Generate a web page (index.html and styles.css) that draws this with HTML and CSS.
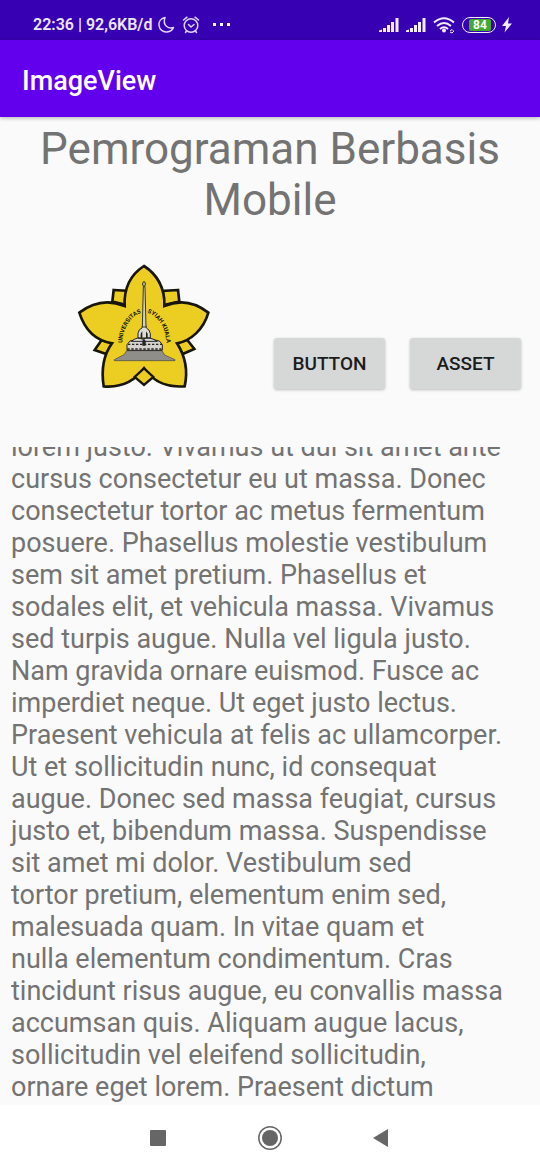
FILE: index.html
```html
<!DOCTYPE html>
<html lang="id">
<head>
<meta charset="utf-8">
<meta name="viewport" content="width=device-width, initial-scale=1">
<title>ImageView</title>
<link rel="stylesheet" href="styles.css">
</head>
<body>
<div class="screen">
  <div class="status">
    <span class="status-text">22:36 | 92,6KB/d</span>
    <svg class="status-left" width="76" height="20" viewBox="0 0 76 20" fill="none" stroke="#e3d6f7" stroke-width="1.5" stroke-linecap="round" stroke-linejoin="round" aria-hidden="true">
      <path d="M8 2.5C3.5 3.500 1.500 7 2 10.500C2.500 14.500 6 17.500 10 17C13 16.700 15.500 15 16.500 12.500C12 14 5 11 8 2.500Z"/>
      <circle cx="34" cy="10.500" r="6.800"/>
      <path d="M26.500 5L30 2.200M41.500 5L38 2.200M31.500 9.500L34 12L37 9.500M29.500 16L28.500 17.500M38.500 16L39.500 17.500"/>
      <g fill="#fff" stroke="none"><rect x="56" y="8" width="3" height="3"/><rect x="63" y="8" width="3" height="3"/><rect x="70" y="8" width="3" height="3"/></g>
    </svg>
    <div class="status-right">
      <svg width="78" height="20" viewBox="0 0 78 20" aria-hidden="true">
        <g fill="#f3edff">
          <path d="M1 17V15.500L4 14.500V17ZM5 13H8V17H5ZM9 10H12V17H9ZM13 7H16V17H13ZM17.500 3H20.500V17H17.500Z"/>
          <path d="M28 17V15.500L31 14.500V17ZM32 13H35V17H32ZM36 10H39V17H36ZM40 7H43V17H40ZM44.500 3H47.500V17H44.500Z"/>
          <circle cx="66" cy="15.500" r="2"/>
        </g>
        <g fill="none" stroke="#f3edff" stroke-width="2">
          <path d="M56 7.500Q66 -1 76 7.500M59 11Q66 5 73 11M62 14Q66 10.500 70 14"/>
          <path stroke-width="1" d="M72 16L74 14.500L75.500 16M76 16L74 18L72 17"/>
        </g>
      </svg>
      <div class="battery"><span class="charge">84</span></div>
      <svg width="10" height="16" viewBox="0 0 10 16" aria-hidden="true"><path fill="#f3edff" d="M7 0L0 9H4L2.500 15.500L10 6.500H6Z"/></svg>
    </div>
  </div>
  <header class="appbar"><h1 class="app-title">ImageView</h1></header>
  <main class="content">
    <h2 class="heading">Pemrograman Berbasis Mobile</h2>
    <div class="row">
      <svg class="logo" width="150" height="145" viewBox="0 0 450 435" role="img" aria-label="Universitas Syiah Kuala">
        <defs>
          <path id="arc-left" d="M157 264A76 96 0 0 1 216 173L226 171"/>
          <path id="arc-right" d="M232 173A76 96 0 0 1 289 264L291 276"/>
        </defs>
        <g fill="#ecce22" stroke="#17150c" stroke-width="8" stroke-linejoin="miter">
          <path d="M131 105L180 108L170 150L127 140ZM324 105L276 108L282 150L328 140ZM95 255L74 285L108 297L130 265ZM352 255L373 282L338 297L318 265Z"/>
          <path d="M222 33C186 56 161 92 164 153C113 132 67 143 28 173C44 224 78 257 126 265C102 298 93 342 101 394C149 398 192 382 222 340C250 382 296 398 344 394C355 345 342 298 321 265C364 257 401 222 415 173C376 142 332 132 283 153C286 99 260 57 222 33Z"/>
        </g>
        <path fill="#ecce22" stroke="#17150c" stroke-width="7" d="M222 340L194 366L222 390L250 366Z"/>
        <path fill="#8f8e89" stroke="#45433b" stroke-width="2" d="M170 287H276L284 300L315 314V317H133V314L162 299Z"/>
        <path fill="#d3d2cf" stroke="#222" stroke-width="3" d="M171 286V269L180 258L205 252H242L268 258L277 269V286Z"/>
        <path stroke="#25231e" stroke-width="4" stroke-dasharray="7 5" d="M174 268H276M172 282H276"/>
        <path fill="#ddd" stroke="#222" stroke-width="3" d="M184 259Q203 243 218 253Q235 242 262 259ZM204 249V235Q206 222 216 219L218 210H227L229 219Q239 223 241 236V249Z"/>
        <path fill="#25231e" d="M212 249V236L217 228V249ZM228 249V229L233 236V249ZM217 272V258L222 251L227 258V272Z"/>
        <path fill="#d3d0c4" stroke="#3a372c" stroke-width="3" d="M217 216L220 95H225L228 216Z"/>
        <ellipse cx="222" cy="87" rx="4" ry="7" fill="#d8d5c2" stroke="#29261b" stroke-width="3"/>
        <g class="seal">
          <text><textPath href="#arc-left">UNIVERSITAS</textPath></text>
          <text><textPath href="#arc-right">SYIAH KUALA</textPath></text>
        </g>
      </svg>
      <div class="actions">
        <button class="btn" type="button">BUTTON</button>
        <button class="btn" type="button">ASSET</button>
      </div>
    </div>
    <div class="scroller">
      <p class="body-text">lorem justo. Vivamus ut dui sit amet ante<br>cursus consectetur eu ut massa. Donec<br>consectetur tortor ac metus fermentum<br>posuere. Phasellus molestie vestibulum<br>sem sit amet pretium. Phasellus et<br>sodales elit, et vehicula massa. Vivamus<br>sed turpis augue. Nulla vel ligula justo.<br>Nam gravida ornare euismod. Fusce ac<br>imperdiet neque. Ut eget justo lectus.<br>Praesent vehicula at felis ac ullamcorper.<br>Ut et sollicitudin nunc, id consequat<br>augue. Donec sed massa feugiat, cursus<br>justo et, bibendum massa. Suspendisse<br>sit amet mi dolor. Vestibulum sed<br>tortor pretium, elementum enim sed,<br>malesuada quam. In vitae quam et<br>nulla elementum condimentum. Cras<br>tincidunt risus augue, eu convallis massa<br>accumsan quis. Aliquam augue lacus,<br>sollicitudin vel eleifend sollicitudin,<br>ornare eget lorem. Praesent dictum</p>
    </div>
  </main>
  <nav class="navbar">
    <button class="nav-btn" type="button" aria-label="Recent apps"><svg width="26" height="26" viewBox="0 0 26 26"><rect x="5" y="5" width="16" height="16" rx="1" fill="#666"/></svg></button>
    <button class="nav-btn" type="button" aria-label="Home"><svg width="26" height="26" viewBox="0 0 26 26"><circle cx="13" cy="13" r="11.200" fill="none" stroke="#666" stroke-width="1.500"/><circle cx="13" cy="13" r="8" fill="#666"/></svg></button>
    <button class="nav-btn" type="button" aria-label="Back"><svg width="26" height="26" viewBox="0 0 26 26"><path d="M4 13L19 4V22Z" fill="#666"/></svg></button>
  </nav>
</div>
</body>
</html>
```

FILE: styles.css
```css
* { box-sizing: border-box; }
body {
  margin: 0;
  font-family: Roboto, "Liberation Sans", sans-serif;
  background: #fafafa;
  color: #737373;
}
.screen {
  display: flex;
  flex-direction: column;
  height: 100vh;
}
.status {
  display: flex;
  align-items: center;
  flex: none;
  height: 40px;
  padding: 10px 28px 0 33px;
  background: #3700b3;
  color: #efe6ff;
}
.status-text {
  font-size: 16px;
  line-height: 20px;
  font-weight: 600;
  white-space: nowrap;
}
.status-left { margin-left: 5px; }
.status-right {
  display: flex;
  align-items: center;
  gap: 6px;
  margin-left: auto;
}
.battery {
  display: flex;
  width: 34px;
  height: 16px;
  padding: 1px 4px 1px 6px;
  border: 1px solid #f3edff;
  border-radius: 8px;
}
.charge {
  flex: 1;
  background: #43a92f;
  border-radius: 2px;
  color: #fff;
  font-size: 12px;
  line-height: 12px;
  font-weight: 700;
  text-align: center;
}
.appbar {
  display: flex;
  align-items: center;
  flex: none;
  height: 77px;
  padding: 4px 22px 0;
  background: #6200ee;
  box-shadow: 0 1px 4px rgba(0, 0, 0, 0.3);
}
.app-title {
  margin: 0;
  color: #fff;
  font-size: 27px;
  line-height: 32px;
  font-weight: 500;
}
.content {
  display: flex;
  flex-direction: column;
  flex: 1;
  min-height: 0;
}
.heading {
  margin: 0;
  padding: 7px 22px 0;
  font-size: 44px;
  line-height: 51px;
  font-weight: 400;
  text-align: center;
}
.row {
  display: flex;
  align-items: flex-end;
  justify-content: space-between;
  padding: 29px 19px 47px 70px;
}
.logo { display: block; }
.seal {
  fill: #17150c;
  font-size: 18px;
  font-weight: 700;
}
.actions {
  display: flex;
  gap: 25px;
  padding-bottom: 11px;
}
.btn {
  width: 111px;
  height: 51px;
  padding: 0;
  border: 0;
  border-radius: 3px;
  background: #d6d8d7;
  box-shadow: 0 1px 3px rgba(0, 0, 0, 0.25);
  color: #1c1c1c;
  font-family: inherit;
  font-size: 19px;
  font-weight: 500;
}
.scroller {
  display: flex;
  flex-direction: column;
  justify-content: flex-end;
  flex: 1;
  min-height: 0;
  overflow: hidden;
  padding: 0 11px 2px;
}
.body-text {
  margin: 0;
  font-size: 27px;
  line-height: 32px;
  white-space: nowrap;
}
.navbar {
  display: flex;
  align-items: center;
  justify-content: center;
  gap: 86px;
  flex: none;
  height: 65px;
  background: #fff;
}
.nav-btn {
  display: flex;
  padding: 0;
  border: 0;
  background: none;
}
```
